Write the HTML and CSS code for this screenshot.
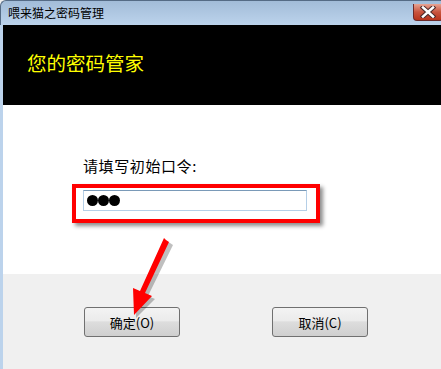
FILE: index.html
```html
<!DOCTYPE html>
<html lang="zh-CN">
<head>
    <meta charset="UTF-8">
    <meta name="viewport" content="width=device-width, initial-scale=1.0">
    <title>喂来猫之密码管理</title>
    <link rel="stylesheet" href="styles.css">
</head>
<body>
    <div class="window">
        <div class="titlebar">
            <span class="title">喂来猫之密码管理</span>
            <div class="close">
                <svg width="20" height="12" viewBox="0 0 20 12">
                    <path d="M5 1.5 L15 10.5 M15 1.5 L5 10.5" stroke="#4a2a2a" stroke-width="4.5" stroke-linecap="square" fill="none"/>
                    <path d="M5 1.5 L15 10.5 M15 1.5 L5 10.5" stroke="#ffffff" stroke-width="2.5" stroke-linecap="square" fill="none"/>
                </svg>
            </div>
        </div>
        <div class="frame">
            <div class="banner">您的密码管家</div>
            <div class="content">
                <div class="label">请填写初始口令:</div>
                <div class="highlight">
                    <div class="field">
                        <span class="dot"></span><span class="dot"></span><span class="dot"></span>
                    </div>
                </div>
            </div>
            <div class="footer">
                <button class="btn">确定(O)</button>
                <button class="btn">取消(C)</button>
            </div>
        </div>

        <svg class="arrow" width="441" height="369" viewBox="0 0 441 369">
            <polygon points="170,243 173,245 148,296 155,299 136,318 135,291 142,294 166,241" fill="rgba(0,0,0,0.25)"/>
            <polygon points="166,240 169,242 145,293 152,296 134,315 133,288 140,291 164,238" fill="#ff0000"/>
        </svg>
    </div>
</body>
</html>
```

FILE: styles.css
```css
* {
    box-sizing: border-box;
    margin: 0;
    padding: 0;
}

body {
    width: 441px;
    height: 369px;
    overflow: hidden;
    font-family: "Noto Sans CJK SC", "Liberation Sans", sans-serif;
    background: #f0f0f0;
}

.window {
    position: relative;
    display: flex;
    flex-direction: column;
    width: 441px;
    height: 369px;
}

.titlebar {
    display: flex;
    align-items: flex-start;
    justify-content: space-between;
    height: 25px;
    background: linear-gradient(to bottom, #a2bcd8, #bcd3ec);
    border-top: 1px solid #556b85;
    border-left: 1px solid #556b85;
    border-top-left-radius: 6px;
}

.title {
    padding-left: 7px;
    padding-top: 4px;
    font-size: 12px;
    line-height: 16px;
    color: #000000;
}

.close {
    display: flex;
    align-items: center;
    justify-content: center;
    width: 30px;
    height: 17px;
    margin-top: 3px;
    margin-right: -2px;
    background: linear-gradient(to bottom, #e8a493, #c9543e 50%, #b8341c);
    border: 1px solid #6b2a2a;
    border-top: none;
    border-radius: 0 0 4px 4px;
}

.frame {
    display: flex;
    flex-direction: column;
    flex: 1;
    border-left: 3px solid;
    border-image: linear-gradient(to right, #bcd3ec 66%, #3a5f8e 66%) 1;
}

.banner {
    height: 80px;
    padding-top: 26px;
    padding-left: 24px;
    background: #000000;
    color: #ffff00;
    font-size: 19.5px;
    line-height: 24px;
}

.content {
    height: 169px;
    padding-top: 52px;
    background: #ffffff;
}

.label {
    padding-left: 80px;
    font-size: 15px;
    line-height: 18px;
    letter-spacing: 0.6px;
    color: #000000;
}

.highlight {
    width: 248px;
    height: 39px;
    margin-top: 9px;
    margin-left: 69px;
    padding: 2px 9px 0 7px;
    border: 4px solid #ff0000;
    box-shadow: 3px 3px 4px rgba(0, 0, 0, 0.45);
}

.field {
    display: flex;
    align-items: center;
    gap: 0;
    width: 224px;
    height: 21px;
    padding-left: 3px;
    background: #ffffff;
    border: 1px solid #b5cfe7;
    border-top-color: #7a9ab8;
}

.dot {
    width: 11px;
    height: 11px;
    border-radius: 50%;
    background: #000000;
}

.footer {
    display: flex;
    gap: 92px;
    flex: 1;
    padding-top: 33px;
    padding-left: 81px;
    background: #f0f0f0;
}

.btn {
    width: 96px;
    height: 30px;
    font-family: "Noto Sans CJK SC", "Liberation Sans", sans-serif;
    font-size: 13px;
    color: #000000;
    background: linear-gradient(to bottom, #f3f3f3 0%, #ebebeb 45%, #dddddd 50%, #cfcfcf 100%);
    border: 1px solid #707070;
    border-radius: 3px;
}

.arrow {
    position: absolute;
    left: 0;
    top: 0;
    pointer-events: none;
}
```
